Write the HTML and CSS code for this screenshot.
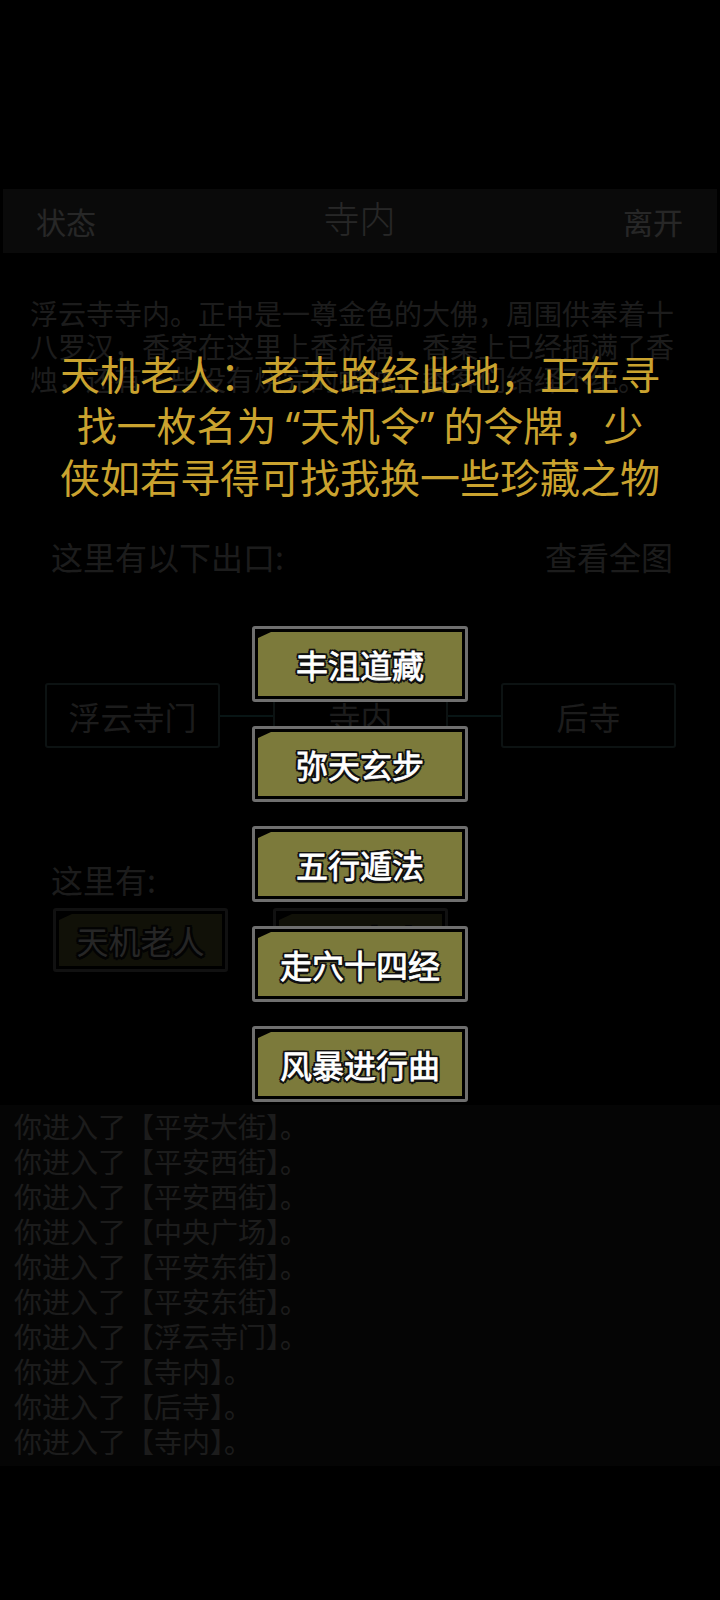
FILE: index.html
```html
<!DOCTYPE html>
<html lang="zh-CN">
<head>
<meta charset="utf-8">
<title>寺内</title>
<link rel="stylesheet" href="styles.css">
</head>
<body>
<div class="app">
  <header class="topbar">
    <span class="tb-left">状态</span>
    <span class="tb-title">寺内</span>
    <span class="tb-right">离开</span>
  </header>
  <main class="room">
    <p class="desc">浮云寺寺内。正中是一尊金色的大佛，周围供奉着十八罗汉，香客在这里上香祈福，香案上已经插满了香烛，还有一些没有烧完的蜡烛，香客们络绎不绝。</p>
    <div class="exits-head"><span>这里有以下出口:</span><span>查看全图</span></div>
    <div class="map">
      <div class="node">浮云寺门</div>
      <div class="link"></div>
      <div class="node">寺内</div>
      <div class="link"></div>
      <div class="node">后寺</div>
    </div>
    <div class="here">这里有:</div>
    <div class="npcs">
      <div class="btn npc"><span class="face">天机老人</span></div>
      <div class="btn npc"><span class="face">明明老人</span></div>
    </div>
  </main>
  <section class="log">
    <p>你进入了【平安大街】。</p>
    <p>你进入了【平安西街】。</p>
    <p>你进入了【平安西街】。</p>
    <p>你进入了【中央广场】。</p>
    <p>你进入了【平安东街】。</p>
    <p>你进入了【平安东街】。</p>
    <p>你进入了【浮云寺门】。</p>
    <p>你进入了【寺内】。</p>
    <p>你进入了【后寺】。</p>
    <p>你进入了【寺内】。</p>
  </section>
</div>
<div class="overlay">
  <p class="speech">天机老人：老夫路经此地，正在寻<br>找一枚名为<span class="q q-open">“</span>天机令<span class="q q-close">”</span>的令牌，少<br>侠如若寻得可找我换一些珍藏之物</p>
  <div class="choices">
    <div class="btn choice"><span class="face">丰沮道藏</span></div>
    <div class="btn choice"><span class="face">弥天玄步</span></div>
    <div class="btn choice"><span class="face">五行遁法</span></div>
    <div class="btn choice"><span class="face">走穴十四经</span></div>
    <div class="btn choice"><span class="face">风暴进行曲</span></div>
  </div>
</div>
</body>
</html>
```

FILE: styles.css
```css
* { box-sizing: border-box; margin: 0; padding: 0; }
html, body { background: #000; }
body {
  width: 720px;
  height: 1600px;
  position: relative;
  overflow: hidden;
  font-family: "Noto Sans CJK SC", "Noto Sans", sans-serif;
}

.app {
  padding-top: 189px;
  color: #c8c8c8;
}

.topbar {
  height: 64px;
  margin: 0 3px;
  background: #363636;
  display: grid;
  grid-template-columns: 1fr auto 1fr;
  align-items: center;
  padding: 0 34px 0 33px;
  font-size: 30px;
  line-height: 1;
  color: #c4c4c4;
}
.tb-left { justify-self: start; }
.tb-title { justify-self: center; font-size: 36px; margin-top: -8px; font-weight: 300; }
.tb-right { justify-self: end; }

.room {
  margin: 0 6px;
}

.desc {
  margin-top: 44px;
  padding: 0 24px;
  font-size: 28px;
  line-height: 33px;
  color: #8c8c8c;
}

.exits-head {
  margin-top: 140px;
  padding: 0 41px 0 45px;
  display: flex;
  justify-content: space-between;
  font-size: 32px;
  line-height: 40px;
  color: #8c8c8c;
}

.map {
  margin-top: 107px;
  padding-left: 39px;
  display: flex;
  align-items: center;
}
.node {
  width: 175px;
  height: 65px;
  border: 2px solid #3e5a5c;
  border-radius: 3px;
  display: flex;
  align-items: center;
  justify-content: center;
  font-size: 32px;
  color: #8a8a8a;
}
.link {
  width: 53px;
  height: 2px;
  background: #2a6a6c;
}

.here {
  margin-top: 111px;
  padding-left: 45px;
  font-size: 32px;
  line-height: 40px;
  color: #8c8c8c;
}

.npcs {
  margin-top: 9px;
  padding-left: 47px;
  display: flex;
  gap: 45px;
}

.btn {
  border: 3px solid #6f6f6f;
  border-radius: 3px;
  background: #000;
  padding: 3px;
  display: flex;
}
.btn .face {
  flex: 1;
  display: flex;
  align-items: center;
  justify-content: center;
  background: #7c7a3b;
  clip-path: polygon(13px 0, 100% 0, 100% 100%, 0 100%, 0 6px);
  color: #fff;
  font-size: 32px;
  font-weight: 400;
  line-height: 1;
  -webkit-text-stroke: 0.8px #fff;
  text-shadow:
    -2px -2px 0 #111, 2px -2px 0 #111, -2px 2px 0 #111, 2px 2px 0 #111,
    0 -2.5px 0 #111, 0 2.5px 0 #111, -2.5px 0 0 #111, 2.5px 0 0 #111;
}

.npc {
  width: 175px;
  height: 64px;
  border-color: #555;
}
.npc .face {
  color: #bdbdbd;
  -webkit-text-stroke: 0;
  background: #54542c;
}

.log {
  margin-top: 133px;
  height: 361px;
  background: #1c1c1c;
  padding: 4px 14px 0;
  font-size: 28px;
  line-height: 35px;
  color: #8e8e8e;
}

.overlay {
  position: absolute;
  inset: 0;
  background: rgba(0, 0, 0, 0.8);
}

.speech {
  margin-top: 348px;
  text-align: center;
  white-space: nowrap;
  font-size: 40px;
  line-height: 50.5px;
  color: #caa32f;
}
.speech .q {
  font-family: "Noto Sans", sans-serif;
}
.speech .q-open { padding-left: 9px; }
.speech .q-close { padding-right: 9px; }

.choices {
  position: absolute;
  top: 626px;
  left: 252px;
  width: 216px;
  display: flex;
  flex-direction: column;
  gap: 24px;
}
.choice {
  height: 76px;
}
```
